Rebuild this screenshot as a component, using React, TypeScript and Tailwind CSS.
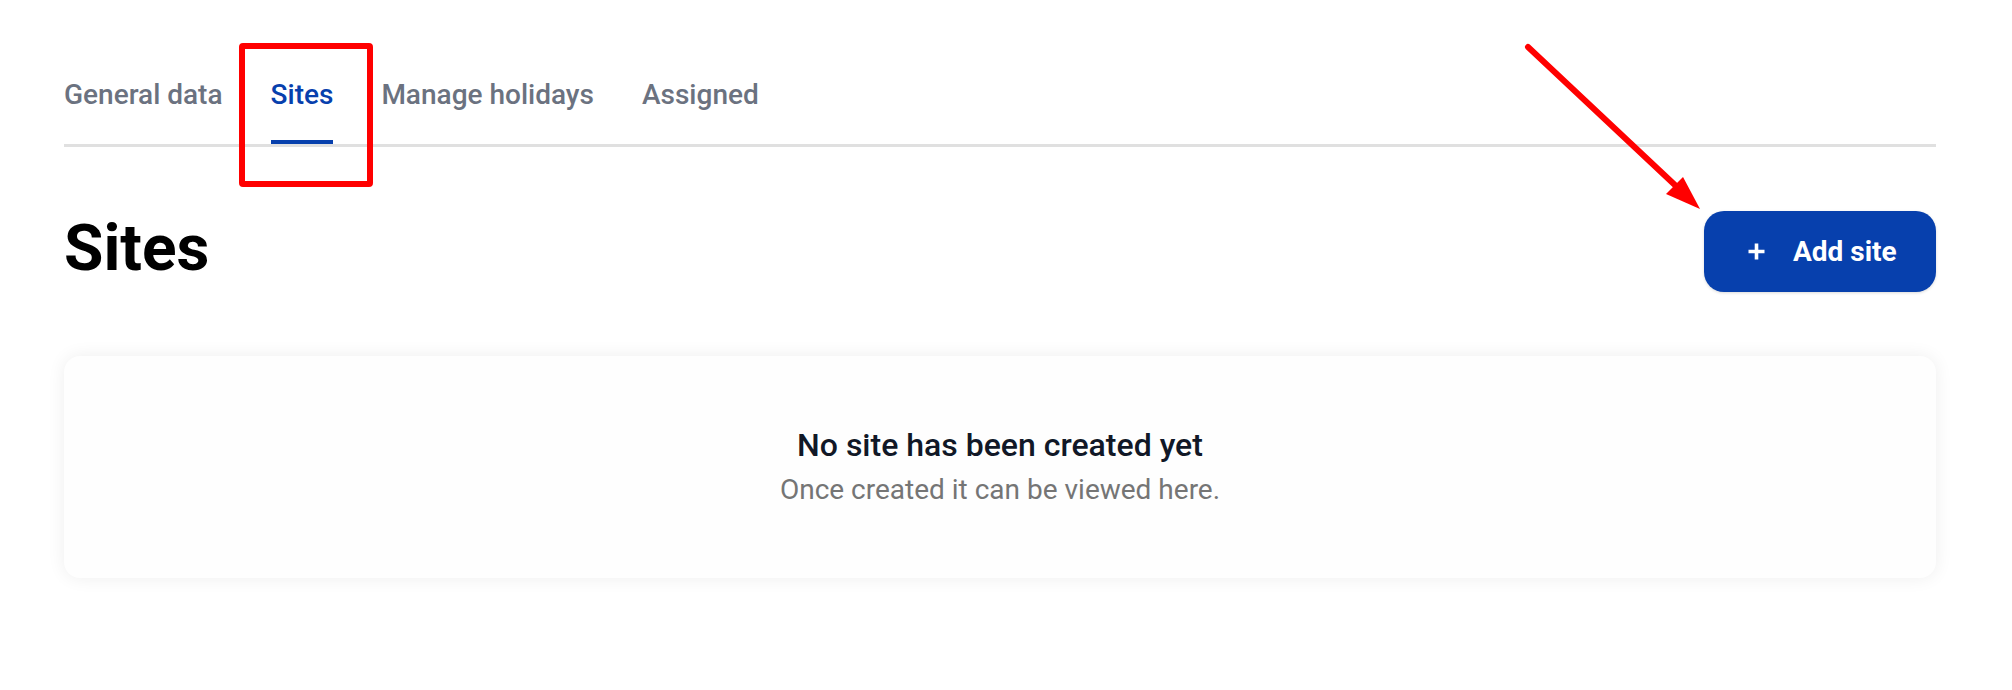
import React from "react";

export default function App() {
  const tabs = ["General data", "Sites", "Manage holidays", "Assigned"];
  return (
    <div className="relative min-h-[690px] bg-white font-['Roboto','Liberation_Sans',sans-serif]">
      <div className="pl-[64px] pr-[76px] pt-[79px]">
        <div className="flex gap-[48px] border-b-[3px] border-[#e0e0e0]">
          {tabs.map((t) =>
            t === "Sites" ? (
              <div
                key={t}
                className="pb-[29px] border-b-4 border-[#0740ad] text-[28px] leading-[32px] font-medium text-[#0740ad]"
              >
                {t}
              </div>
            ) : (
              <div
                key={t}
                className="pb-[33px] text-[28px] leading-[32px] font-medium text-[#6b7280]"
              >
                {t}
              </div>
            )
          )}
        </div>

        <div className="mt-[64px] flex items-start justify-between">
          <h1 className="mt-[6px] text-[64px] leading-[64px] font-bold text-black">Sites</h1>
          <button className="flex h-[81px] w-[232px] items-center gap-[27px] rounded-[20px] bg-[#0740ad] pl-[43px] text-white shadow-[0_1px_3px_rgba(0,0,0,0.15)]">
            <svg width="19" height="19" viewBox="0 0 19 19" fill="none">
              <path d="M9.5 1.5v16M1.5 9.5h16" stroke="white" strokeWidth="3.6" strokeLinecap="butt" />
            </svg>
            <span className="text-[28px] leading-[34px] font-bold">Add site</span>
          </button>
        </div>

        <div className="mt-[64px] flex flex-col items-center rounded-2xl bg-[#fefefe] pt-[69px] pb-[72px] shadow-[0_0_18px_rgba(0,0,0,0.07)]">
          <div className="text-[32px] leading-[40px] font-medium text-[#111827]">
            No site has been created yet
          </div>
          <div className="mt-[9px] text-[28px] leading-[32px] text-[#757575]">
            Once created it can be viewed here.
          </div>
        </div>
      </div>

      {/* annotation: red box around Sites tab */}
      <div className="pointer-events-none absolute left-[239px] top-[43px] h-[144px] w-[134px] rounded-[4px] border-[6px] border-[#ff0000]" />

      {/* annotation: red arrow */}
      <svg
        className="pointer-events-none absolute left-0 top-0"
        width="2012"
        height="690"
        viewBox="0 0 2012 690"
      >
        <line x1="1528" y1="47" x2="1676" y2="186" stroke="#ff0000" strokeWidth="6" strokeLinecap="round" />
        <polygon points="1666,194 1683,177 1700,209" fill="#ff0000" />
      </svg>
    </div>
  );
}
